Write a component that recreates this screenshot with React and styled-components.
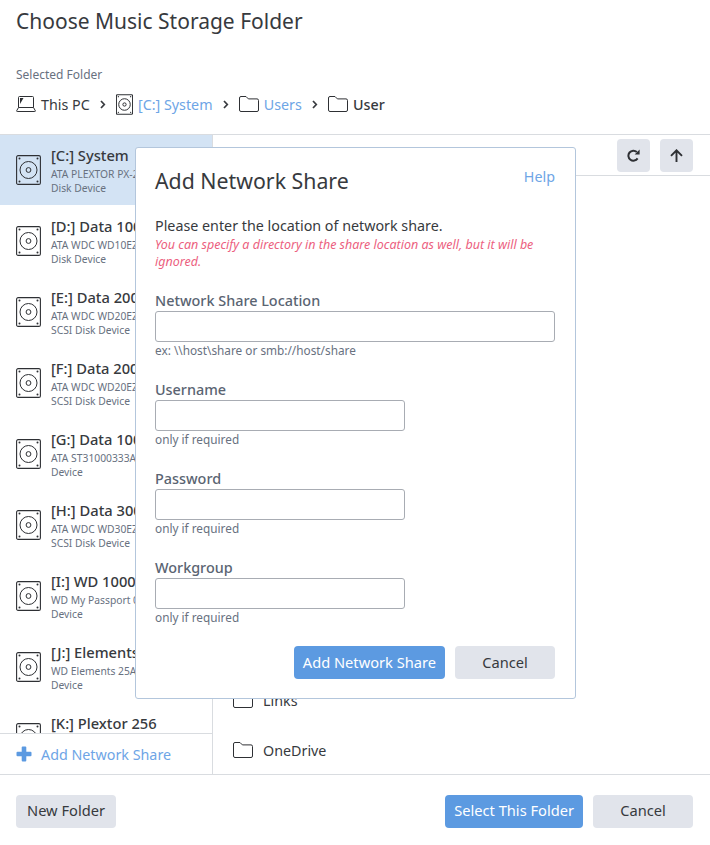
import React from 'react';
import styled, { createGlobalStyle } from 'styled-components';

const GlobalStyle = createGlobalStyle`
  html, body {
    margin: 0;
    padding: 0;
    background: #fff;
  }
  body {
    font-family: "Noto Sans", "Open Sans", sans-serif;
    color: #373a3e;
  }
  * {
    box-sizing: border-box;
  }
`;

const Page = styled.div`
  position: relative;
  width: 710px;
  height: 845px;
  overflow: hidden;
  display: flex;
  flex-direction: column;
`;

const Header = styled.header`
  height: 135px;
  flex: none;
  padding: 5px 16px 0;
  border-bottom: 1px solid #d9dce0;
`;

const Title = styled.h1`
  margin: 0;
  font-size: 21px;
  line-height: 32px;
  font-weight: 400;
`;

const FolderLabel = styled.div`
  margin-top: 29px;
  font-size: 12px;
  line-height: 18px;
  color: #68717f;
`;

const Crumbs = styled.div`
  margin-top: 8px;
  height: 24px;
  display: flex;
  align-items: center;
`;

const Crumb = styled.span`
  display: flex;
  align-items: center;
  gap: 5px;
  font-size: 14.3px;
  color: ${(p) => (p.$link ? '#6ea5e6' : '#373a3e')};
  font-weight: ${(p) => (p.$current ? 500 : 400)};
`;

const CrumbSep = styled.span`
  display: flex;
  width: 26.2px;
  justify-content: center;
`;

const Body = styled.div`
  flex: 1;
  min-height: 0;
  display: flex;
`;

const Sidebar = styled.aside`
  width: 213px;
  flex: none;
  display: flex;
  flex-direction: column;
  border-right: 1px solid #d9dce0;
`;

const DriveList = styled.div`
  flex: 1;
  min-height: 0;
  overflow: hidden;
  display: flex;
  flex-direction: column;
  gap: 1px;
`;

const DriveRow = styled.div`
  height: 70px;
  flex: none;
  display: flex;
  align-items: center;
  gap: 10px;
  padding-left: 16px;
  background: ${(p) => (p.$active ? '#d3e3f4' : 'transparent')};
`;

const DriveText = styled.div`
  min-width: 0;
  white-space: nowrap;
`;

const DriveName = styled.div`
  margin-bottom: 2px;
  font-size: 14.7px;
  line-height: 20px;
  font-weight: 500;
`;

const DriveLine = styled.div`
  font-size: 10.3px;
  line-height: 14px;
  color: #68717f;
`;

const AddShare = styled.div`
  height: 41px;
  flex: none;
  display: flex;
  align-items: center;
  gap: 9px;
  padding-left: 16px;
  background: #fff;
  border-top: 1px solid #d9dce0;
  font-size: 14.3px;
  color: #6ea5e6;
`;

const Content = styled.main`
  flex: 1;
  min-width: 0;
  display: flex;
  flex-direction: column;
`;

const Toolbar = styled.div`
  height: 41px;
  flex: none;
  display: flex;
  justify-content: flex-end;
  gap: 10px;
  padding: 4px 17px 0 0;
  border-bottom: 1px solid #d9dce0;
`;

const IconButton = styled.button`
  width: 33px;
  height: 33px;
  padding: 0;
  display: flex;
  align-items: center;
  justify-content: center;
  border: 0;
  border-radius: 4px;
  background: #e1e4eb;
  color: #373a3e;
`;

const FolderList = styled.div`
  flex: 1;
  min-height: 0;
  overflow: hidden;
  display: flex;
  flex-direction: column;
  justify-content: flex-end;
  gap: 4px;
  padding-bottom: 1px;
`;

const FolderRow = styled.div`
  height: 46px;
  flex: none;
  display: flex;
  align-items: center;
  gap: 10px;
  padding-left: 20px;
  font-size: 14.3px;
`;

const Footer = styled.footer`
  height: 71px;
  flex: none;
  display: flex;
  align-items: center;
  gap: 10px;
  padding: 2px 17px 0 16px;
  border-top: 1px solid #d9dce0;
`;

const Spacer = styled.div`
  flex: 1;
`;

const Button = styled.button`
  height: 33px;
  min-width: ${(p) => (p.$primary ? 0 : 100)}px;
  padding: 0 9px 2px;
  border: 0;
  border-radius: 4px;
  font-family: inherit;
  font-size: 14.65px;
  background: ${(p) => (p.$primary ? '#5c9ae1' : '#e1e4eb')};
  color: ${(p) => (p.$primary ? '#fff' : '#373a3e')};
`;

const Modal = styled.section`
  position: absolute;
  left: 135px;
  top: 147px;
  width: 441px;
  height: 552px;
  padding: 16px 20px 0 19px;
  background: #fff;
  border: 1px solid #b3c6dc;
  border-radius: 3px;
`;

const ModalHead = styled.div`
  display: flex;
  justify-content: space-between;
  align-items: flex-start;
`;

const ModalTitle = styled.h2`
  margin: 0;
  font-size: 21.3px;
  line-height: 34px;
  font-weight: 400;
`;

const HelpLink = styled.a`
  margin-top: 2px;
  font-size: 14.3px;
  line-height: 22px;
  color: #6ea5e6;
`;

const Intro = styled.p`
  margin: 18px 0 0;
  font-size: 14.3px;
  line-height: 20px;
`;

const Warning = styled.p`
  margin: 0 0 19px;
  font-size: 12.5px;
  line-height: 17px;
  font-style: italic;
  color: #ec5f80;
`;

const Field = styled.div`
  margin-top: ${(p) => (p.$first ? 0 : 19)}px;
`;

const FieldLabel = styled.label`
  display: block;
  padding-top: 2px;
  font-size: 14.4px;
  line-height: 20px;
  font-weight: 500;
  color: #5a6472;
`;

const TextBox = styled.input`
  display: block;
  width: ${(p) => (p.$wide ? 400 : 250)}px;
  height: 31px;
  border: 1px solid #a8acb3;
  border-radius: 3px;
  background: #fff;
`;

const Hint = styled.div`
  font-size: 11.8px;
  line-height: 17px;
  color: #68717f;
`;

const ModalActions = styled.div`
  margin-top: 20px;
  display: flex;
  justify-content: flex-end;
  gap: 10px;
`;

const DiskIcon = ({ size = 'lg' }) => {
  const w = size === 'lg' ? 25 : 17;
  const h = size === 'lg' ? 30 : 21;
  return (
    <svg width={w} height={h} viewBox="0 0 25 30" fill="none" stroke="#2e3034" style={{ flex: 'none' }}>
      <rect x="0.6" y="0.6" width="23.8" height="28.8" rx="1.5" strokeWidth="1.1" vectorEffect="non-scaling-stroke" />
      <circle cx="12.5" cy="15" r="8.5" strokeWidth="1" vectorEffect="non-scaling-stroke" />
      <circle cx="12.5" cy="15" r="2.4" strokeWidth="1" vectorEffect="non-scaling-stroke" />
      <g fill="#2e3034" stroke="none">
        <circle cx="3.5" cy="3.5" r="1" />
        <circle cx="21.5" cy="3.5" r="1" />
        <circle cx="3.5" cy="26.5" r="1" />
        <circle cx="21.5" cy="26.5" r="1" />
      </g>
    </svg>
  );
};

const FolderIcon = () => (
  <svg width="20" height="16" viewBox="0 0 20 16" fill="none" stroke="#2e3034" strokeWidth="1" style={{ flex: 'none' }}>
    <path d="M0.5 14V2A1.5 1.5 0 0 1 2 0.5h5l2.4 2.4H18A1.5 1.5 0 0 1 19.5 4.4V14A1.5 1.5 0 0 1 18 15.5H2A1.5 1.5 0 0 1 0.5 14z" />
  </svg>
);

const LaptopIcon = () => (
  <svg width="20" height="16" viewBox="0 0 20 16" fill="none" stroke="#2e3034" strokeWidth="1" style={{ flex: 'none' }}>
    <path d="M2.5 11.5V1.5a1 1 0 0 1 1-1h13a1 1 0 0 1 1 1v10" />
    <path d="M2.5 11.5h15l1.8 3.2a.5.5 0 0 1-.5.8H1.2a.5.5 0 0 1-.5-.8z" />
    <path d="M4 2h3.5L4 8z" fill="#2e3034" stroke="none" />
  </svg>
);

const PlusIcon = () => (
  <svg width="16" height="16" viewBox="0 0 16 16" fill="#5c9ae1" style={{ flex: 'none' }}>
    <rect x="5.7" y="0.5" width="4.6" height="15" rx="1" />
    <rect x="0.5" y="5.7" width="15" height="4.6" rx="1" />
  </svg>
);

const ChevronIcon = () => (
  <svg width="6" height="9" viewBox="0 0 6 9" fill="none" stroke="#373a3e" strokeWidth="1.7">
    <path d="M1 1l3.3 3.5L1 8" />
  </svg>
);

const RedoIcon = () => (
  <svg width="13" height="13" viewBox="0 0 13 13" fill="none" style={{ flex: 'none' }}>
    <path d="M10.6 9.4A5 5 0 1 1 9.8 3" stroke="#2e3034" strokeWidth="2" />
    <path d="M7.6 5.4h5V0.4z" fill="#2e3034" />
  </svg>
);

const UpIcon = () => (
  <svg width="13" height="13" viewBox="0 0 13 13" fill="none" stroke="#2e3034" strokeWidth="1.9">
    <path d="M6.5 13V1.5M1 6.8l5.5-5.5L12 6.8" />
  </svg>
);

const drives = [
  { name: '[C:] System', lines: ['ATA PLEXTOR PX-256M5Pro SCSI', 'Disk Device'], active: true },
  { name: '[D:] Data 1000', lines: ['ATA WDC WD10EZEX-00BN5A0', 'Disk Device'] },
  { name: '[E:] Data 2000', lines: ['ATA WDC WD20EZRX-00D8PB0', 'SCSI Disk Device'] },
  { name: '[F:] Data 2000', lines: ['ATA WDC WD20EZRX-00D8PB0', 'SCSI Disk Device'] },
  { name: '[G:] Data 1000', lines: ['ATA ST31000333AS SCSI Disk', 'Device'] },
  { name: '[H:] Data 3000', lines: ['ATA WDC WD30EZRX-00D8PB0', 'SCSI Disk Device'] },
  { name: '[I:] WD 1000', lines: ['WD My Passport 0748 USB', 'Device'] },
  { name: '[J:] Elements', lines: ['WD Elements 25A2 USB', 'Device'] },
  { name: '[K:] Plextor 256', lines: ['ATA PLEXTOR PX-256M5Pro', 'Disk Device'] },
];

const fields = [
  { label: 'Username', hint: 'only if required' },
  { label: 'Password', hint: 'only if required' },
  { label: 'Workgroup', hint: 'only if required' },
];

export default function App() {
  return (
    <Page>
      <GlobalStyle />
      <Header>
        <Title>Choose Music Storage Folder</Title>
        <FolderLabel>Selected Folder</FolderLabel>
        <Crumbs>
          <Crumb>
            <LaptopIcon />
            This PC
          </Crumb>
          <CrumbSep>
            <ChevronIcon />
          </CrumbSep>
          <Crumb $link>
            <DiskIcon size="sm" />
            [C:] System
          </Crumb>
          <CrumbSep>
            <ChevronIcon />
          </CrumbSep>
          <Crumb $link>
            <FolderIcon />
            Users
          </Crumb>
          <CrumbSep>
            <ChevronIcon />
          </CrumbSep>
          <Crumb $current>
            <FolderIcon />
            User
          </Crumb>
        </Crumbs>
      </Header>
      <Body>
        <Sidebar>
          <DriveList>
            {drives.map((drive) => (
              <DriveRow key={drive.name} $active={drive.active}>
                <DiskIcon />
                <DriveText>
                  <DriveName>{drive.name}</DriveName>
                  {drive.lines.map((line) => (
                    <DriveLine key={line}>{line}</DriveLine>
                  ))}
                </DriveText>
              </DriveRow>
            ))}
          </DriveList>
          <AddShare>
            <PlusIcon />
            Add Network Share
          </AddShare>
        </Sidebar>
        <Content>
          <Toolbar>
            <IconButton>
              <RedoIcon />
            </IconButton>
            <IconButton>
              <UpIcon />
            </IconButton>
          </Toolbar>
          <FolderList>
            <FolderRow>
              <FolderIcon />
              Links
            </FolderRow>
            <FolderRow>
              <FolderIcon />
              OneDrive
            </FolderRow>
          </FolderList>
        </Content>
      </Body>
      <Footer>
        <Button>New Folder</Button>
        <Spacer />
        <Button $primary>Select This Folder</Button>
        <Button>Cancel</Button>
      </Footer>
      <Modal>
        <ModalHead>
          <ModalTitle>Add Network Share</ModalTitle>
          <HelpLink>Help</HelpLink>
        </ModalHead>
        <Intro>Please enter the location of network share.</Intro>
        <Warning>You can specify a directory in the share location as well, but it will be ignored.</Warning>
        <Field $first>
          <FieldLabel>Network Share Location</FieldLabel>
          <TextBox $wide />
          <Hint>ex: \\host\share or smb://host/share</Hint>
        </Field>
        {fields.map((field) => (
          <Field key={field.label}>
            <FieldLabel>{field.label}</FieldLabel>
            <TextBox />
            <Hint>{field.hint}</Hint>
          </Field>
        ))}
        <ModalActions>
          <Button $primary>Add Network Share</Button>
          <Button>Cancel</Button>
        </ModalActions>
      </Modal>
    </Page>
  );
}
